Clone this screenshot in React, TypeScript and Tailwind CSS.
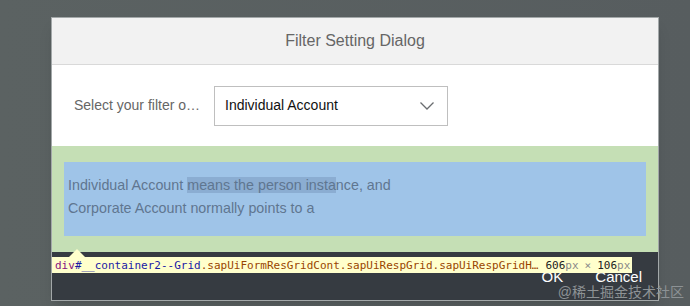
const sans = { fontFamily: '"Liberation Sans", Arial, sans-serif' };
const mono = { fontFamily: '"DejaVu Sans Mono", "Liberation Mono", monospace' };

function Chevron() {
  return (
    <svg width="16" height="10" viewBox="0 0 16 10" className="text-[#6a6d70]">
      <path d="M1.5 1.5 L8 8 L14.5 1.5" fill="none" stroke="currentColor" strokeWidth="1.3" />
    </svg>
  );
}

function InspectTip() {
  return (
    <div className="absolute left-[52px] top-[257px] w-[580px] h-[16px] bg-[#ffffcc] flex items-center pl-[3px] text-[11px] leading-none whitespace-nowrap" style={mono}>
      <div className="absolute left-[17px] -top-[8px] w-0 h-0 border-l-[8px] border-r-[8px] border-b-[8px] border-l-transparent border-r-transparent border-b-[#ffffcc]" />
      <span className="text-[#881280]">div</span>
      <span className="text-[#1a1aa6]">#__container2--Grid</span>
      <span className="text-[#994500]">.sapUiFormResGridCont.sapUiRespGrid.sapUiRespGridH…</span>
      <span className="ml-[7px] text-[#222]">606</span>
      <span className="text-[#888]">px</span>
      <span className="text-[#888] mx-[6px]">×</span>
      <span className="text-[#222]">106</span>
      <span className="text-[#888]">px</span>
    </div>
  );
}

export default function App() {
  return (
    <div className="relative w-[690px] h-[306px] overflow-hidden bg-gradient-to-r from-[#5b6262] to-[#575d5f] pt-[17px] pl-[51px]" style={sans}>
      <div className="w-[608px] border border-[#a3a8a9] flex flex-col shadow-lg">
        <div className="h-[47px] bg-[#f2f2f2] border-b border-[#d9d9d9] flex items-center justify-center text-[16px] text-[#666]">
          Filter Setting Dialog
        </div>
        <div className="h-[81px] bg-white flex items-center pl-[22px]">
          <span className="text-[14px] text-[#666] w-[140px]">Select your filter o…</span>
          <div className="w-[234px] h-[40px] border border-[#bfbfbf] flex items-center justify-between pl-[10px] pr-[12px]">
            <span className="text-[14px] text-[#111]">Individual Account</span>
            <Chevron />
          </div>
        </div>
        <div className="h-[106px] bg-[#c5dfb5] pt-[16px] px-[12px]">
          <div className="h-[74px] bg-[#9fc4e8] pt-[12px] pl-[4px] text-[14.3px] leading-[23px] text-[#5f7690]">
            <div>
              Individual Account <span className="bg-[#8badd2]">means the person insta</span>nce, and
            </div>
            <div>Corporate Account normally points to a</div>
          </div>
        </div>
        <div className="h-[48px] bg-[#363b41] flex justify-end items-start pt-[14px] pr-[16px] gap-[32px] text-[15px] text-white">
          <span>OK</span>
          <span>Cancel</span>
        </div>
      </div>
      <InspectTip />
      <div className="absolute right-[6px] bottom-[7px] text-[14px] leading-none text-[#8d9295]" style={{ fontFamily: '"Liberation Sans", "Noto Sans CJK SC", sans-serif' }}>
        @稀土掘金技术社区
      </div>
    </div>
  );
}
